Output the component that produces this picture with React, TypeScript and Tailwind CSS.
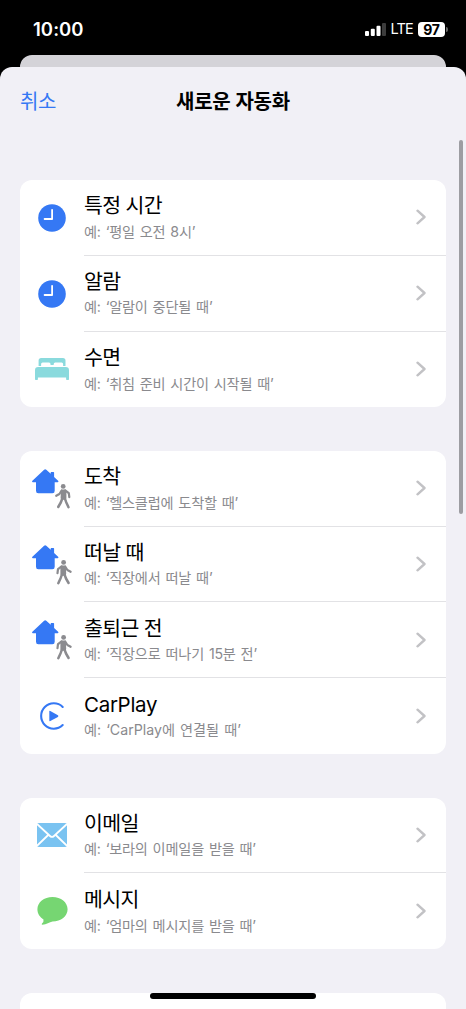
import type { ReactNode } from 'react';

function Clock() {
  return (
    <svg className="h-7 w-7" viewBox="0 0 28 28">
      <circle cx="14" cy="14" r="13.8" fill="#3578f4" />
      <path d="M14.1 5.8V15H6.6" fill="none" stroke="#fff" strokeWidth="1.8" strokeLinecap="round" strokeLinejoin="round" />
    </svg>
  );
}

function Bed() {
  return (
    <svg className="h-6 w-[34px]" viewBox="0 0 34 24" fill="#8adadd">
      <path d="M3.6 9V3.5Q3.6.9 6.2.9H27.9Q30.5.9 30.5 3.5V9H28.1V7.1Q28.1 5.6 26.6 5.6H20.2Q18.7 5.6 18.7 7.1V8H15.5V7.1Q15.5 5.6 14 5.6H7.6Q6.1 5.6 6.1 7.1V9Z" />
      <path d="M0 13.2Q0 10 3.2 10H30.8Q34 10 34 13.2V22.2Q34 22.9 33.3 22.9H31.8Q31.1 22.9 31.1 22.2V20.5H2.9V22.2Q2.9 22.9 2.2 22.9H.7Q0 22.9 0 22.2Z" />
    </svg>
  );
}

function HouseWalk({ leaving = false }: { leaving?: boolean }) {
  return (
    <svg className="h-10 w-10" viewBox="0 0 40 40">
      <path
        d="M.4 11.7 12.1.8Q13.2-.2 14.3.8L18.7 4.800V3.6Q18.7 2.9 19.4 2.9H21.400Q22.100 2.900 22.100 3.600V8L26.100 11.700Q27 12.900 25.600 13.200H22.700V21.800Q22.700 24.300 20.400 24.300H6.300Q4 24.300 4 21.800V13.200H.9Q-.5 12.900.4 11.700Z"
        fill="#3578f4"
      />
      <g transform={leaving ? 'translate(62.8 0) scale(-1 1)' : undefined}>
        <circle cx="31.2" cy="17.4" r="2.4" fill="#8b8b8f" />
        <path d="M29 20.400H32.800Q34.200 20.400 34.400 21.700V29.200Q34.300 30.400 32.500 30.700H30Q28.500 30.200 28.600 28.800Z" fill="#8b8b8f" />
        <g fill="none" stroke="#8b8b8f" strokeLinecap="round" strokeLinejoin="round">
          <path d="M29.600 21.600 27.400 25 24.200 26.800M33.200 21.500 36.800 24.100 37.300 28.100" strokeWidth="2.200" />
          <path d="M30.300 29.500 28.800 33.500 26.200 38M32.800 29.300 34.200 33.200 36.500 38.200" strokeWidth="2.500" />
        </g>
      </g>
    </svg>
  );
}

function CarPlay() {
  return (
    <svg className="ml-[2px] h-7 w-7" viewBox="0 0 28 28">
      <path d="M23.7 4.9A12.7 12.7 0 1 0 23.7 23.1" fill="none" stroke="#3578f4" strokeWidth="2.1" strokeLinecap="round" />
      <path d="M10.3 9.4V18.6Q10.3 19.6 11.3 19.1L18.9 14.9Q20 14.1 18.9 13.3L11.3 8.9Q10.3 8.5 10.3 9.4Z" fill="#3578f4" />
    </svg>
  );
}

function Mail() {
  return (
    <svg className="h-6 w-[30px]" viewBox="0 0 30 24">
      <rect width="30" height="24" rx="1.8" fill="#7ac3f1" />
      <path d="M0 1 13 13Q15 14.8 17 13L30 1M0 22.8 11.2 12M30 22.8 18.8 12" fill="none" stroke="#fff" strokeWidth="1.8" />
    </svg>
  );
}

function Bubble() {
  return (
    <svg className="h-7 w-[31px]" viewBox="0 0 31 28">
      <path d="M15.5 0C24 0 30.6 5.3 30.6 12.3S24 24.5 15.5 24.5C12.5 25.2 9.5 27.4 5.4 27.8Q4 27.7 5 26.6Q7 24.5 6.5 22.4C2.8 20.2.4 16.7.4 12.3.4 5.3 7 0 15.5 0Z" fill="#76d672" />
    </svg>
  );
}

type Item = { title: string; hint: string; icon: ReactNode; latin?: boolean };

const groups: Item[][] = [
  [
    { title: '특정 시간', hint: '예: ‘평일 오전 8시’', icon: <Clock /> },
    { title: '알람', hint: '예: ‘알람이 중단될 때’', icon: <Clock /> },
    { title: '수면', hint: '예: ‘취침 준비 시간이 시작될 때’', icon: <Bed /> },
  ],
  [
    { title: '도착', hint: '예: ‘헬스클럽에 도착할 때’', icon: <HouseWalk /> },
    { title: '떠날 때', hint: '예: ‘직장에서 떠날 때’', icon: <HouseWalk leaving /> },
    { title: '출퇴근 전', hint: '예: ‘직장으로 떠나기 15분 전’', icon: <HouseWalk leaving /> },
    { title: 'CarPlay', hint: '예: ‘CarPlay에 연결될 때’', icon: <CarPlay />, latin: true },
  ],
  [
    { title: '이메일', hint: '예: ‘보라의 이메일을 받을 때’', icon: <Mail /> },
    { title: '메시지', hint: '예: ‘엄마의 메시지를 받을 때’', icon: <Bubble /> },
  ],
];

function Row({ item, last }: { item: Item; last: boolean }) {
  return (
    <div className="flex h-[75.8px]">
      <div className="flex w-16 shrink-0 items-center justify-center">{item.icon}</div>
      <div className={last ? 'flex grow items-center' : 'flex grow items-center border-b border-[#e2e2e5]'}>
        <div className="grow whitespace-nowrap pt-[1px]">
          <div className={item.latin ? 'text-[20.5px] leading-[27.5px] tracking-[-0.3px] text-black' : 'text-[20.5px] leading-[27.5px] tracking-[-0.65px] text-black'}>
            {item.title}
          </div>
          <div className={item.latin ? 'text-[14.2px] leading-[24px] tracking-[0] text-[#8a8a8e] [word-spacing:1px]' : 'text-[14.2px] leading-[24px] tracking-[-0.2px] text-[#8a8a8e] [word-spacing:1.1px]'}>
            {item.hint}
          </div>
        </div>
        <svg className="mr-5 h-4 w-[10px]" viewBox="0 0 10 16" fill="none" stroke="#c2c2c5" strokeWidth="2.4" strokeLinecap="round" strokeLinejoin="round">
          <path d="m1.5 1.7 7 6.3-7 6.3" />
        </svg>
      </div>
    </div>
  );
}

export default function App() {
  return (
    <div className="relative flex h-[1009px] w-[466px] flex-col overflow-hidden bg-black font-['Inter','Noto_Sans_CJK_KR',sans-serif]">
      <div className="flex h-[55px] shrink-0 items-start justify-between pl-[33px] pr-[18px] pt-[17px] text-white">
        <div className="text-[18.5px] font-semibold leading-6 tracking-[0.05px]">10:00</div>
        <div className="flex h-6 items-center">
          <svg className="mr-[5px] h-[13px] w-[21px]" viewBox="0 0 21 13" fill="#fff">
            <rect y="8" width="4" height="5" rx="1" />
            <rect x="5.8" y="5.7" width="4" height="7.3" rx="1" />
            <rect x="11.5" y="2.8" width="4" height="10.2" rx="1" />
            <rect x="17" width="4" height="13" rx="1" fill="#3c3c3c" />
          </svg>
          <span className="mr-[5px] text-[14.5px] tracking-[-0.8px]">LTE</span>
          <div className="flex h-[15px] w-[27px] items-center justify-center rounded-[4px] bg-white text-[14px] font-bold tracking-[-0.3px] text-black">97</div>
          <div className="ml-px h-[5px] w-[2px] rounded-r-full bg-[#666]" />
        </div>
      </div>
      <div className="mx-5 h-3 shrink-0 rounded-t-[12px] bg-[#d4d3d8]" />
      <div className="flex grow flex-col rounded-t-[12px] bg-[#f1f0f6]">
        <div className="grid h-[113px] shrink-0 grid-cols-3 items-start px-5 pt-5">
          <button className="text-left text-[20px] leading-[30px] tracking-[-0.3px] text-[#3578f4]">취소</button>
          <h1 className="text-center text-[20px] font-semibold leading-[30px] tracking-[-0.2px] text-black">새로운 자동화</h1>
        </div>
        <div className="flex flex-col gap-[43.5px] px-5">
          {groups.map((items, i) => (
            <div key={i} className="overflow-hidden rounded-[12px] bg-white">
              {items.map((item, j) => (
                <Row key={item.title} item={item} last={j === items.length - 1} />
              ))}
            </div>
          ))}
          <div className="h-10 rounded-t-[12px] bg-white" />
        </div>
      </div>
      <div className="absolute left-[458.5px] top-[140px] h-[374px] w-[4px] rounded-full bg-[#9d9da2]" />
      <div className="absolute bottom-[10px] left-[150px] h-[6px] w-[166px] rounded-full bg-black" />
    </div>
  );
}
